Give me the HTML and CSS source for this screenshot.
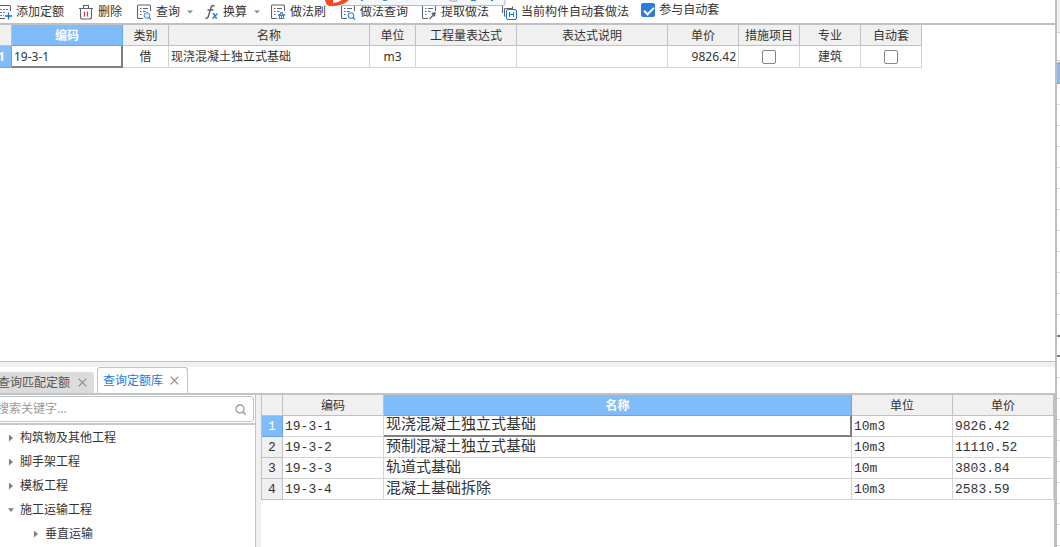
FILE: index.html
```html
<!DOCTYPE html>
<html lang="zh-CN">
<head>
<meta charset="utf-8">
<title>定额做法</title>
<link rel="stylesheet" href="styles.css">
</head>
<body>
<svg class="defs" aria-hidden="true">
  <symbol id="list" viewBox="0 0 16 16">
    <path d="M14.500 7V2q0-1-1-1h-11q-1 0-1 1v11.500q0 1 1 1H7" fill="none" stroke="#5c6270" stroke-width="1.100"/>
    <path d="M4 4.500h1.500M7 4.500h5M4 7.500h1.500M7 7.500h2.500M4 10.500h1.500" stroke="#5c6270" fill="none"/>
  </symbol>
  <symbol id="caret" viewBox="0 0 6 4"><path d="M0 .5h6L3 3.500z" fill="#8a8a8a"/></symbol>
  <symbol id="cross" viewBox="0 0 9 9"><path d="M.7.7l7.600 7.600M8.300.7L.7 8.300" stroke="#8c8c8c" stroke-width="1.200"/></symbol>
</svg>
<div class="app">
  <main class="window">
    <div class="toolbar">
      <div class="tools">
        <button class="tool"><svg class="icon" viewBox="0 0 16 16"><path d="M3 1.500h10.500q1 0 1 1V7M3 14.500h6" fill="none" stroke="#5c6270" stroke-width="1.100"/><path d="M4 5.500h8M4 8.500h6M4 11.500h4" stroke="#4a87d0" stroke-dasharray="2 1"/><path d="M12.500 8.500v7M9 12h7" stroke="#1672dc" stroke-width="1.300"/></svg>添加定额</button>
        <button class="tool"><svg class="icon" viewBox="0 0 16 16"><path d="M1 4.500h14M5.500 4V1.500h5V4M2.500 5v8q0 2 2 2h7q2 0 2-2V5" fill="none" stroke="#5c6270" stroke-width="1.100"/><path d="M6.500 7.500v5M9.500 7.500v5" stroke="#d23a40" stroke-width="1.200"/></svg>删除</button>
        <button class="tool"><svg class="icon" viewBox="0 0 16 16"><use href="#list"/><circle cx="11" cy="11.500" r="2.800" fill="#dcecff" stroke="#4285d6"/><path d="M13 13.500l2 2" stroke="#4285d6" stroke-width="1.300"/></svg>查询<svg class="drop" viewBox="0 0 6 4"><use href="#caret"/></svg></button>
        <button class="tool"><svg class="icon" viewBox="0 0 16 16"><path d="M11.500 2q-2.500-1.500-3.600 2L5.300 12.500q-.8 2.500-2.800 1.500M4.500 6h6" fill="none" stroke="#5c6270" stroke-width="1.500"/><path d="M9.500 9.500q1.500-.5 2 2t2.500 2.500M14.500 9.500l-5 5" fill="none" stroke="#1672dc" stroke-width="1.300"/></svg>换算<svg class="drop" viewBox="0 0 6 4"><use href="#caret"/></svg></button>
        <button class="tool"><svg class="icon" viewBox="0 0 16 16"><use href="#list"/><path d="M8.500 11.500h6v-1h-2v-2h-2v2h-2zM9.500 12v2.500M11.500 12v2.500M13.500 12v2.500M8.500 14.500h6" fill="#bdd7f6" stroke="#4b7cbc"/></svg>做法刷</button>
        <button class="tool"><svg class="icon" viewBox="0 0 16 16"><use href="#list"/><circle cx="11" cy="11.500" r="2.800" fill="#fff" stroke="#2f7fe0" stroke-width="1.100"/><path d="M13 13.500l2 2" stroke="#2f7fe0" stroke-width="1.300"/></svg>做法查询</button>
      </div>
      <div class="tools tools-tight">
        <button class="tool"><svg class="icon" viewBox="0 0 16 16"><use href="#list"/><path d="M8.500 15l3.500-3.500" stroke="#5c6270" stroke-width="1.300"/><path d="M11 9l3 3M12.500 10.500l2-2" stroke="#5c6270" stroke-width="2"/></svg>提取做法</button>
        <button class="tool"><svg class="icon" viewBox="0 0 16 16"><path d="M4.500 12H3.500V4.500M1.500 9V1.500M3.500 4.500h8V2.500" fill="none" stroke="#5c6270" stroke-width="1.100"/><rect x="5.500" y="5.500" width="10" height="10" rx="1.500" fill="#fff" stroke="#1672dc"/><path d="M8.500 8v5M12.500 8v5M8.500 10.500h4" stroke="#1672dc"/></svg>当前构件自动套做法</button>
        <label class="auto"><input type="checkbox" class="check" checked>参与自动套</label>
      </div>
      <svg class="floating" viewBox="0 0 182 8" aria-hidden="true">
        <path d="M20 0h160v3q0 2-2 2H16z" fill="#f4f8fb"/><path d="M16 5.500h162q2 0 2-2V0" fill="none" stroke="#aebccb"/>
        <path d="M0 0q1 6 6 6 12 0 18-6h-7q-4 3-9 3V0z" fill="#f9481c"/>
        <path d="M36 0h2v1h-2zM57 0h6q-3 2-6 0M146 0h5v1h-5zM166 0h2v1h-2z" fill="#3c80c8"/><path d="M124 0q2 2 8 1V0" fill="none" stroke="#9aa8b6"/>
      </svg>
    </div>

    <section class="upper">
      <table class="grid grid-top">
        <colgroup><col class="w-mark"><col class="w-code"><col class="w-kind"><col class="w-title"><col class="w-kind"><col class="w-code-s"><col class="w-desc"><col class="w-price"><col class="w-flag"><col class="w-flag"><col class="w-flag"></colgroup>
        <thead><tr><th></th><th class="picked">编码</th><th>类别</th><th>名称</th><th>单位</th><th>工程量表达式</th><th>表达式说明</th><th>单价</th><th>措施项目</th><th>专业</th><th>自动套</th></tr></thead>
        <tbody><tr><th class="picked">1</th><td class="focus">19-3-1</td><td class="mid">借</td><td>现浇混凝土独立式基础</td><td class="mid">m3</td><td></td><td></td><td class="num">9826.42</td><td class="mid"><input type="checkbox" class="check" aria-label="措施项目"></td><td class="mid">建筑</td><td class="mid"><input type="checkbox" class="check" aria-label="自动套"></td></tr></tbody>
      </table>
    </section>

    <nav class="tabs">
      <div class="tab"><button class="tab-name">查询匹配定额</button><button class="close" aria-label="关闭"><svg viewBox="0 0 9 9"><use href="#cross"/></svg></button></div>
      <div class="tab active"><button class="tab-name">查询定额库</button><button class="close" aria-label="关闭"><svg viewBox="0 0 9 9"><use href="#cross"/></svg></button></div>
    </nav>

    <section class="lower">
      <aside class="side">
        <div class="search-row">
          <div class="search"><input type="text" placeholder="搜索关键字..." aria-label="搜索关键字"><svg class="lens" viewBox="0 0 11 11"><circle cx="5" cy="5" r="4" fill="none" stroke="#999" stroke-width="1.300"/><path d="M7.500 7.500l3 3" stroke="#999" stroke-width="1.500"/></svg></div>
        </div>
        <ul class="tree">
          <li><span class="arrow"></span>构筑物及其他工程</li>
          <li><span class="arrow"></span>脚手架工程</li>
          <li><span class="arrow"></span>模板工程</li>
          <li><span class="arrow open"></span>施工运输工程</li>
          <li class="child"><span class="arrow"></span>垂直运输</li>
        </ul>
      </aside>
      <div class="results">
        <table class="grid grid-lib">
          <colgroup><col class="w-row"><col class="w-lib"><col><col class="w-lib"><col class="w-lib"></colgroup>
          <thead><tr><th></th><th>编码</th><th class="picked">名称</th><th>单位</th><th>单价</th></tr></thead>
          <tbody>
            <tr><th class="picked">1</th><td>19-3-1</td><td class="focus cjk">现浇混凝土独立式基础</td><td>10m3</td><td>9826.42</td></tr>
            <tr><th>2</th><td>19-3-2</td><td class="cjk">预制混凝土独立式基础</td><td>10m3</td><td>11110.52</td></tr>
            <tr><th>3</th><td>19-3-3</td><td class="cjk">轨道式基础</td><td>10m</td><td>3803.84</td></tr>
            <tr><th>4</th><td>19-3-4</td><td class="cjk">混凝土基础拆除</td><td>10m3</td><td>2583.59</td></tr>
          </tbody>
        </table>
      </div>
    </section>
  </main>
  <div class="neighbour" aria-hidden="true"><div class="n-head"></div><div class="n-gap"></div><div class="n-picked"></div><div class="n-rows"><div class="n-focus"></div></div></div>
</div>
</body>
</html>
```
FILE: styles.css
```css
* { box-sizing: border-box; }
body {
  margin: 0;
  font: 12px/16px "Noto Sans", "Noto Sans CJK SC", sans-serif;
  color: #333;
  background: #fff;
}
button, input { font: inherit; color: inherit; }
button { border: 0; padding: 0; background: none; }
.defs { display: none; }
.app { display: flex; height: 100vh; overflow: hidden; }
.window { flex: 1; min-width: 0; display: flex; flex-direction: column; border-right: 2px solid #c0c0c2; }

.toolbar { position: relative; display: flex; gap: 13px; height: 25px; flex: none; border-bottom: 2px solid #c0c0c2; margin-left: -4px; white-space: nowrap; }
.tools { display: flex; gap: 14px; align-items: center; }
.tools-tight { gap: 12px; }
.tool { display: flex; align-items: center; gap: 4px; }
.icon { width: 16px; height: 16px; flex: none; }
.drop { width: 6px; height: 4px; margin: 0 -4px 0 3px; }
.auto { display: flex; align-items: center; gap: 4px; padding-bottom: 4px; }
.floating { position: absolute; top: 0; left: 329px; width: 182px; height: 8px; }

.check { appearance: none; display: block; width: 14px; height: 14px; margin: 0 auto; border: 1px solid #858585; border-radius: 2px; background: #fff; }
.check:checked { background: #2b7de1; border-color: #2b7de1; }
.check:checked::after { content: ""; display: block; width: 8px; height: 4px; margin: 3px 2px; border: solid #fff; border-width: 0 0 2px 2px; transform: rotate(-45deg); }

.upper { flex: 1; min-height: 0; border-bottom: 1px solid #c0c0c2; }
.grid { table-layout: fixed; border-collapse: separate; border-spacing: 0; }
.grid th, .grid td { height: 21px; padding: 0 2px; overflow: hidden; white-space: nowrap; border: solid #d4d4d4; border-width: 0 1px 1px 0; line-height: 16px; }
.grid td { text-align: left; }
.grid th { background: #f0f0f0; border-color: #c0c0c2; font-weight: 400; text-align: center; }
.grid thead th { padding-top: 2px; }
.grid .picked { background: #80bbfa; border-color: #64a7ee; color: #fff; font-weight: 700; }
.grid td.mid { text-align: center; }
.grid td.num { text-align: right; }
.grid td.focus { border: solid #808080; border-width: 0 2px 2px 0; padding-top: 1px; }
.grid-top { width: 922px; }
.grid-top td, .grid-top tbody th { height: 22px; }
.grid-top tbody th { padding: 0; text-align: left; text-indent: -2px; }
.w-mark { width: 12px; }
.w-code { width: 111px; }
.w-kind { width: 46px; }
.w-title { width: 201px; }
.w-code-s { width: 101px; }
.w-desc { width: 151px; }
.w-price { width: 71px; }
.w-flag { width: 61px; }

.tabs { flex: none; display: flex; align-items: flex-end; gap: 3px; height: 32px; border-top: 5px solid #f0f0f0; border-bottom: 1px solid #c0c4c6; }
.tab { display: flex; align-items: center; gap: 8px; height: 21px; margin-left: -2px; padding: 0 7px 0 0; background: #dcdcdc; border-radius: 0 3px 0 0; color: #555; }
.tab.active { height: 26px; margin: 0; padding: 0 8px 0 5px; gap: 7px; background: #fff; color: #1f78dc; border: 1px solid #c0c4c6; border-bottom: 0; border-radius: 3px 3px 0 0; }
.tab-name { white-space: nowrap; }
.close { display: flex; }
.close svg { width: 9px; height: 9px; }

.lower { flex: none; display: flex; height: 153px; }
.lower { border-top: 1px solid #c0c4c6; }
.side { width: 256px; flex: none; border-right: 1px solid #c0c4c6; }
.search-row { padding: 1px 1px 1px 0; border-bottom: 2px solid #c8c8ca; }
.search { display: flex; align-items: center; height: 26px; margin-left: -8px; padding: 0 7px 0 4px; border: 1px solid #c0c4c6; border-radius: 3px; }
.search input { flex: 1; min-width: 0; border: 0; padding: 0; outline: 0; background: none; }
.search input::placeholder { color: #9a9a9a; }
.lens { width: 11px; height: 11px; }
.tree { list-style: none; margin: 0; padding: 1px 0 0 8px; }
.tree li { display: flex; align-items: center; gap: 6px; height: 24px; }
.tree .child { padding-left: 25px; }
.arrow { width: 6px; height: 7px; background: #808080; clip-path: polygon(16% 0, 84% 50%, 16% 100%); }
.arrow.open { clip-path: polygon(0 25%, 100% 25%, 50% 80%); }
.results { flex: 1; min-width: 0; padding-left: 5px; background: linear-gradient(to right, #f0f0f0 5px, #fff 5px); border-right: 1px solid #c0c0c2; }
.grid-lib { width: 100%; border-left: 1px solid #c0c0c2; }
.grid-lib td, .grid-lib tbody th { font-family: "Liberation Mono", "Noto Sans CJK SC", monospace; font-size: 13px; padding-top: 2px; }
.grid-lib tbody .picked { font-weight: 400; }
.grid-lib td.cjk { font-size: 15px; }
.w-row { width: 21px; }
.w-lib { width: 101px; }

.neighbour { width: 3px; flex: none; display: flex; flex-direction: column; }
.n-head { height: 33px; background: #f0f0f0; border-bottom: 1px solid #d0d0d0; }
.n-gap { height: 30px; border-bottom: 3px double #c8c8ca; }
.n-picked { height: 21px; background: #80bbfa; border: solid #64a7ee; border-width: 1px 0; }
.n-rows { flex: 1; padding-top: 251px; background: repeating-linear-gradient(#fff 0 20px, #dcdcdc 20px 21px); }
.n-focus { height: 22px; border: solid #808080; border-width: 2px 0; }
```
